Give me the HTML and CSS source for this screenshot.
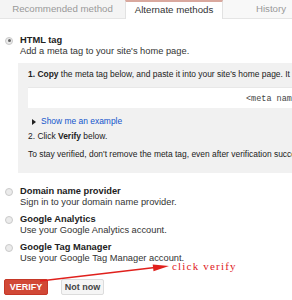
FILE: index.html
```html
<!DOCTYPE html>
<html lang="en">
<head>
  <meta charset="UTF-8">
  <title>Verify ownership</title>
  <link rel="stylesheet" href="styles.css">
</head>
<body>
  <div class="page">
    <div class="tabs">
      <div class="tab tab-rec">Recommended method</div>
      <div class="tab tab-alt active">Alternate methods</div>
      <div class="tab tab-hist">History</div>
    </div>

    <div class="methods">
      <div class="method">
        <span class="radio checked"></span>
        <div class="method-body">
          <div class="method-title">HTML tag</div>
          <div class="method-desc">Add a meta tag to your site's home page.</div>

          <div class="details">
            <div class="step"><b>1. Copy</b> the meta tag below, and paste it into your site's home page. It should go in the &lt;head&gt; section, before the first &lt;body&gt; section.</div>
            <div class="code-box"><code>&lt;meta name="google-site-verification"</code></div>
            <div class="example"><span class="tri"></span><a href="#">Show me an example</a></div>
            <div class="step">2. Click <b>Verify</b> below.</div>
            <div class="note">To stay verified, don't remove the meta tag, even after verification succeeds.</div>
          </div>
        </div>
      </div>

      <div class="method">
        <span class="radio"></span>
        <div class="method-body">
          <div class="method-title">Domain name provider</div>
          <div class="method-desc">Sign in to your domain name provider.</div>
        </div>
      </div>

      <div class="method">
        <span class="radio"></span>
        <div class="method-body">
          <div class="method-title">Google Analytics</div>
          <div class="method-desc">Use your Google Analytics account.</div>
        </div>
      </div>

      <div class="method">
        <span class="radio"></span>
        <div class="method-body">
          <div class="method-title">Google Tag Manager</div>
          <div class="method-desc">Use your Google Tag Manager account.</div>
        </div>
      </div>
    </div>

    <div class="actions">
      <button class="btn btn-verify">VERIFY</button>
      <button class="btn btn-later">Not now</button>
    </div>

    <svg class="arrow" width="135" height="28" viewBox="0 0 135 28">
      <line x1="2" y1="23" x2="117" y2="9.6" stroke="#e0201c" stroke-width="1.5"/>
      <polygon points="131,8 115.5,13.3 114.7,6.4" fill="#e0201c"/>
    </svg>
    <span class="hint">click verify</span>
  </div>
</body>
</html>
```

FILE: styles.css
```css
* {
  box-sizing: border-box;
}
body {
  margin: 0;
  font-family: "Liberation Sans", Arial, sans-serif;
  font-size: 9.3px;
  color: #222;
  background: #fff;
  overflow: hidden;
}
.page {
  position: relative;
  width: 292px;
  height: 300px;
  overflow: hidden;
}
.tabs {
  display: flex;
  height: 19px;
  width: 400px;
}
.tab {
  font-size: 9.7px;
  color: #999;
  background: #f4f4f4;
  border-bottom: 1px solid #e5e5e5;
  line-height: 18px;
  text-align: center;
}
.tab-rec {
  width: 125px;
}
.tab-alt {
  width: 98px;
}
.tab-hist {
  width: 96px;
  background: #f8f8f8;
}
.tab.active {
  background: #fff;
  color: #333;
  border: 1px solid #e2e2e2;
  border-top: 2px solid #d9a89e;
  border-bottom: none;
  line-height: 16px;
}
.methods {
  width: 420px;
  padding-top: 16px;
}
.method {
  display: flex;
  padding-left: 5px;
  margin-bottom: 6px;
}
.radio {
  flex: none;
  width: 8px;
  height: 8px;
  margin-top: 1.5px;
  margin-right: 7px;
  border-radius: 50%;
  background: #ebebeb;
  border: 1px solid #cacaca;
  position: relative;
}
.radio.checked::after {
  content: "";
  position: absolute;
  left: 1.5px;
  top: 1.5px;
  width: 3px;
  height: 3px;
  border-radius: 50%;
  background: #666;
}
.method-body {
  flex: 1;
}
.method-title {
  font-weight: bold;
  line-height: 11px;
}
.method-desc {
  line-height: 11px;
  color: #333;
}
.details {
  margin-top: 6px;
  margin-bottom: 7px;
  background: #f1f1f1;
  padding: 6px 0 13px 10px;
  width: 400px;
  margin-left: -2px;
  font-size: 8.45px;
}
.step {
  line-height: 11px;
  white-space: nowrap;
}
.code-box {
  background: #fff;
  height: 21px;
  margin: 7px 0 8px;
  padding-left: 218px;
  line-height: 21px;
  border-top: 1px solid #e8e8e8;
}
.code-box code {
  font-family: "Liberation Mono", "Courier New", monospace;
  font-size: 8.5px;
  color: #444;
  white-space: nowrap;
}
.example {
  display: flex;
  align-items: center;
  padding-left: 4px;
  line-height: 11px;
  margin-bottom: 4px;
}
.tri {
  width: 0;
  height: 0;
  border-left: 4px solid #222;
  border-top: 3px solid transparent;
  border-bottom: 3px solid transparent;
  margin-right: 5px;
}
.example a {
  color: #1155cc;
  text-decoration: none;
}
.note {
  margin-top: 7px;
  line-height: 11px;
  white-space: nowrap;
}
.actions {
  display: flex;
  gap: 13px;
  padding-left: 4px;
  margin-top: 15px;
}
.btn {
  height: 16px;
  padding: 0;
  font-family: "Liberation Sans", Arial, sans-serif;
  font-size: 9px;
  font-weight: bold;
  border-radius: 2px;
  cursor: pointer;
}
.btn-verify {
  width: 44px;
  background: #d14836;
  color: #fff;
  border: 1px solid #c53727;
}
.btn-later {
  width: 43px;
  background: #f5f5f5;
  color: #444;
  border: 1px solid #dcdcdc;
}
.arrow {
  position: absolute;
  left: 38px;
  top: 258px;
}
.hint {
  position: absolute;
  left: 172px;
  top: 260px;
  font-family: "Liberation Serif", "Times New Roman", serif;
  font-size: 11px;
  letter-spacing: 1.2px;
  color: #e0201c;
}
```
